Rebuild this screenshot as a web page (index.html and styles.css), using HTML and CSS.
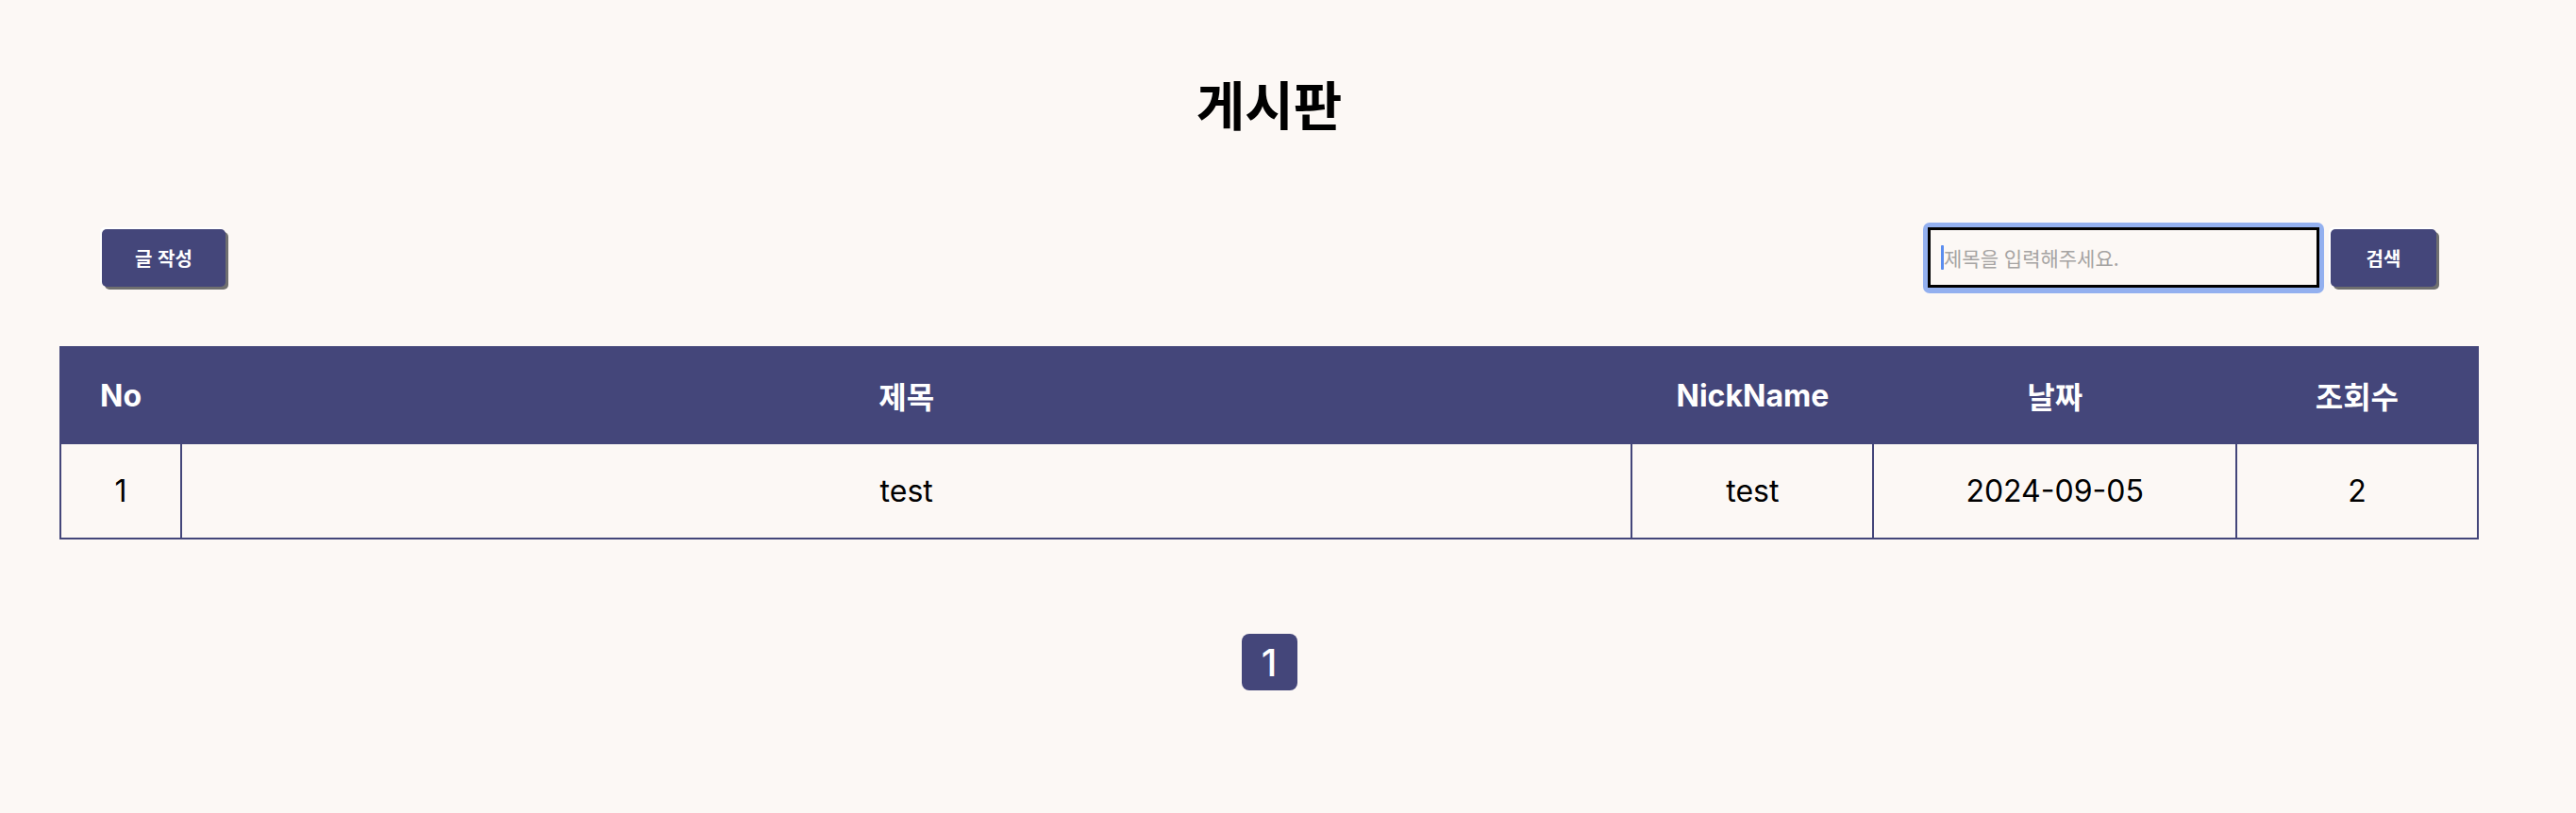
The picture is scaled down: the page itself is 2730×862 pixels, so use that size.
FILE: index.html
```html
<!DOCTYPE html>
<html lang="ko">
<head>
<meta charset="utf-8">
<title>게시판</title>
<link rel="stylesheet" href="styles.css">
</head>
<body>
<div class="page">
  <h1 class="title">게시판</h1>
  <div class="toolbar">
    <button class="btn btn-write" type="button">글 작성</button>
    <div class="search">
      <div class="search-field">
        <input class="search-input" type="text" placeholder="제목을 입력해주세요.">
        <span class="caret"></span>
      </div>
      <button class="btn btn-search" type="button">검색</button>
    </div>
  </div>
  <table class="board">
    <colgroup>
      <col class="c-no">
      <col class="c-title">
      <col class="c-nick">
      <col class="c-date">
      <col class="c-views">
    </colgroup>
    <thead>
      <tr>
        <th>No</th>
        <th>제목</th>
        <th>NickName</th>
        <th>날짜</th>
        <th>조회수</th>
      </tr>
    </thead>
    <tbody>
      <tr>
        <td>1</td>
        <td>test</td>
        <td>test</td>
        <td>2024-09-05</td>
        <td>2</td>
      </tr>
    </tbody>
  </table>
  <nav class="pagination">
    <span class="page-num active">1</span>
  </nav>
</div>
</body>
</html>
```

FILE: styles.css
```css
html, body {
  margin: 0;
  padding: 0;
  background: #fcf8f5;
}

body {
  font-family: "Inter", "Noto Sans CJK KR", sans-serif;
  color: #000;
  height: 862px;
  overflow: hidden;
}

.page {
  width: 2690px;
}

.title {
  margin: 0;
  padding-top: 69px;
  line-height: 80px;
  font-size: 56px;
  font-weight: 700;
  text-align: center;
  font-family: "Noto Sans CJK KR", sans-serif;
}

.toolbar {
  margin: 87px 108px 0 108px;
  height: 75px;
  display: flex;
  align-items: center;
  justify-content: space-between;
}

.btn {
  background: #44467a;
  color: #fff;
  border: none;
  border-radius: 5px;
  font-family: "Noto Sans CJK KR", sans-serif;
  font-weight: 700;
  font-size: 20px;
  height: 61px;
  padding: 0;
  box-shadow: 3px 3px 0 #6f6f6f, -2px -2px 0 #ffffff;
  cursor: pointer;
}

.btn-write {
  width: 131px;
}

.btn-search {
  width: 112px;
}

.search {
  display: flex;
  align-items: center;
  gap: 7px;
}

.search-field {
  position: relative;
  background: #93b0ef;
  padding: 5px 5px 6px 5px;
  border-radius: 7px;
  display: flex;
}

.search-input {
  box-sizing: border-box;
  width: 415px;
  height: 64px;
  border: 3px solid #000;
  background: #fcf8f5;
  padding: 0 0 0 14px;
  font-family: "Noto Sans CJK KR", sans-serif;
  font-size: 21px;
  outline: none;
  margin: 0;
}

.search-input::placeholder {
  color: #a6a4a3;
}

.caret {
  position: absolute;
  left: 19px;
  top: 24px;
  width: 3px;
  height: 26px;
  background: #5b8def;
  border-radius: 1px;
}

.board {
  margin: 56px 63px 0 63px;
  width: 2564px;
  border-collapse: collapse;
  table-layout: fixed;
}

.c-no { width: 5%; }
.c-title { width: 60%; }
.c-nick { width: 10%; }
.c-date { width: 15%; }
.c-views { width: 10%; }

.board th {
  background: #44467a;
  color: #fff;
  font-size: 32px;
  font-weight: 700;
  height: 100px;
  padding: 0;
  border: 2px solid #44467a;
  text-align: center;
}

.board td {
  font-size: 32px;
  font-weight: 400;
  height: 99px;
  padding: 0;
  border: 2px solid #44467a;
  text-align: center;
}

.pagination {
  margin-top: 100px;
  display: flex;
  justify-content: center;
}

.page-num {
  width: 59px;
  height: 60px;
  display: flex;
  align-items: center;
  justify-content: center;
  border-radius: 8px;
  font-size: 40px;
  font-weight: 500;
  color: #fff;
}

.page-num.active {
  background: #44467a;
}
```
